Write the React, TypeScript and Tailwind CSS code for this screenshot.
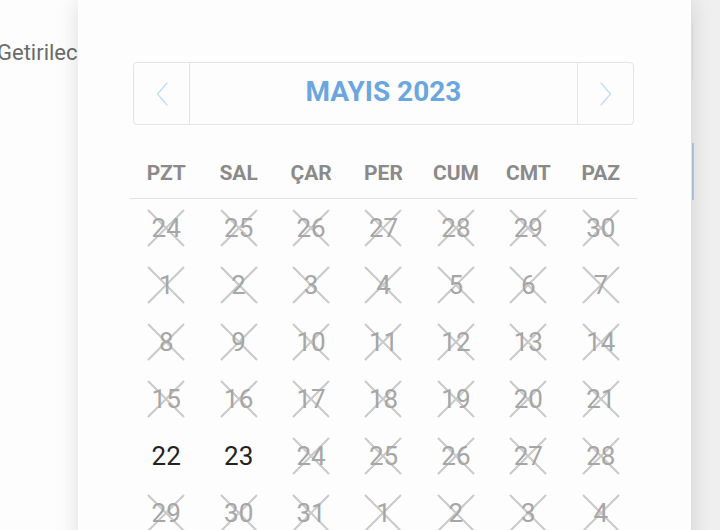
import React from "react";

type Day = { n: number; open?: boolean };

const weekdays = ["PZT", "SAL", "ÇAR", "PER", "CUM", "CMT", "PAZ"];

const weeks: Day[][] = [
  [24, 25, 26, 27, 28, 29, 30].map((n) => ({ n })),
  [1, 2, 3, 4, 5, 6, 7].map((n) => ({ n })),
  [8, 9, 10, 11, 12, 13, 14].map((n) => ({ n })),
  [15, 16, 17, 18, 19, 20, 21].map((n) => ({ n })),
  [
    { n: 22, open: true },
    { n: 23, open: true },
    ...[24, 25, 26, 27, 28].map((n) => ({ n })),
  ],
  [29, 30, 31, 1, 2, 3, 4].map((n) => ({ n })),
];

function Chevron({ dir }: { dir: "left" | "right" }) {
  return (
    <svg width="12" height="24" viewBox="0 0 12 24" fill="none">
      <path
        d={dir === "left" ? "M11 1 L1.5 12 L11 23" : "M1 1 L10.5 12 L1 23"}
        stroke="#c6dcf0"
        strokeWidth="1.4"
        strokeLinecap="round"
        strokeLinejoin="round"
      />
    </svg>
  );
}

function DayCell({ day }: { day: Day }) {
  return (
    <div className="relative flex h-[57px] items-center justify-center">
      {!day.open && (
        <svg
          className="absolute left-1/2 top-1/2 -translate-x-1/2 -translate-y-1/2"
          width="38"
          height="38"
          viewBox="0 0 38 38"
        >
          <path d="M1 1 L37 37 M37 1 L1 37" stroke="#c9c9c9" strokeWidth="2" />
        </svg>
      )}
      <span
        className={`relative text-[26px] leading-none ${
          day.open ? "text-[#222222]" : "text-[#a6a6a6]"
        }`}
      >
        {day.n}
      </span>
    </div>
  );
}

export default function App() {
  return (
    <div
      className="relative flex h-[530px] w-[720px] overflow-hidden bg-[#fdfdfd]"
      style={{ fontFamily: "Roboto, 'Noto Sans', sans-serif" }}
    >
      {/* page behind the picker */}
      <div className="flex-1">
        <p className="ml-[-3px] mt-[36px] whitespace-nowrap text-[22px] text-[#6b6b6b]">
          Getirilec
        </p>
      </div>
      <div className="flex w-[29px] flex-col bg-[#efefef]">
        <div className="ml-[1px] mt-[23px] h-[57px] w-[1px] bg-[#e2e2e2]" />
        <div className="ml-[1px] mt-[63px] h-[57px] w-[2px] bg-[#b3cbe6]" />
      </div>

      {/* date picker sheet */}
      <div className="absolute left-[78px] top-0 h-[560px] w-[613px] bg-[#fdfdfd] pl-[55px] pr-[57px] pt-[62px] shadow-[0_0_22px_rgba(0,0,0,0.13)]">
        <div className="flex h-[63px] rounded-[4px] border border-[#e4e4e4]">
          <div className="flex w-[56px] items-center justify-center border-r border-[#e4e4e4]">
            <Chevron dir="left" />
          </div>
          <div className="flex flex-1 items-center justify-center pb-[3px] text-[28px] font-bold text-[#6ba7de]">
            MAYIS 2023
          </div>
          <div className="flex w-[56px] items-center justify-center border-l border-[#e4e4e4]">
            <Chevron dir="right" />
          </div>
        </div>

        <div className="ml-[-3px] mr-[-3px]">
          <div className="mt-[24px] grid h-[50px] grid-cols-7 items-center border-b border-[#e2e2e2]">
            {weekdays.map((w) => (
              <div
                key={w}
                className="text-center text-[21px] font-bold text-[#8a8a8a]"
              >
                {w}
              </div>
            ))}
          </div>
          {weeks.map((week, i) => (
            <div key={i} className="grid grid-cols-7">
              {week.map((d, j) => (
                <DayCell key={j} day={d} />
              ))}
            </div>
          ))}
        </div>
      </div>
    </div>
  );
}
